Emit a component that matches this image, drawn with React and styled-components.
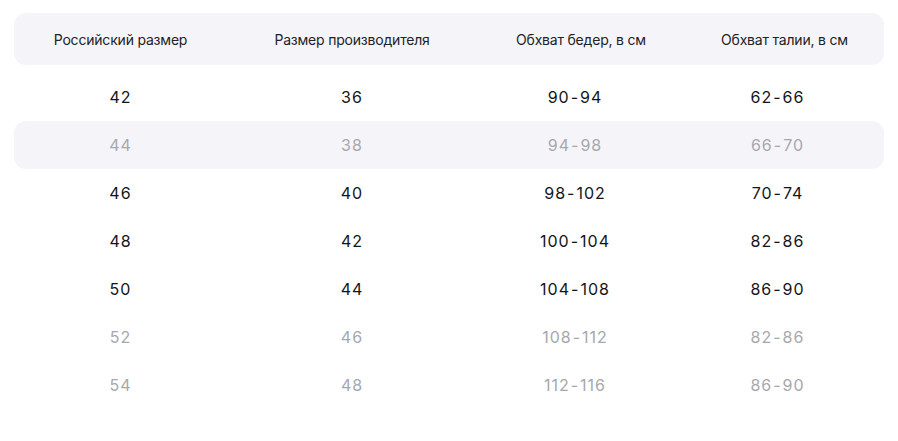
import styled, { createGlobalStyle } from 'styled-components';

const GlobalStyle = createGlobalStyle`
  body {
    margin: 0;
    background: #fff;
    font-family: Inter, "Noto Sans", sans-serif;
  }
`;

// Whole table wrapper
const Table = styled.div`
  padding: 13px 14px 0 14px;
  width: 870px;
`;

// Shared column grid for header and rows
const Row = styled.div`
  display: grid;
  grid-template-columns: 213px 250px 208px 1fr;
  align-items: center;
  height: 48px;
  border-radius: 12px;
  background: ${(p) => (p.$shaded ? '#f5f5f9' : 'transparent')};
`;

const HeaderRow = styled(Row)`
  height: 52px;
  background: #f5f5f9;
  margin-bottom: 8px;
`;

const HeadCell = styled.div`
  text-align: center;
  font-size: 14px;
  letter-spacing: -0.2px;
  color: #222226;
`;

const Cell = styled.div`
  text-align: center;
  font-size: 16px;
  letter-spacing: 1px;
  color: ${(p) => (p.$muted ? '#a7a7ad' : '#141417')};
  padding-right: ${(p) => p.$shift || 0}px;
`;

// a little more air around the range hyphen
const Dash = styled.span`
  margin: 0 1px;
`;

const columns = ['Российский размер', 'Размер производителя', 'Обхват бедер, в см', 'Обхват талии, в см'];

const rows = [
  { v: ['42', '36', '90-94', '62-66'] },
  { v: ['44', '38', '94-98', '66-70'], muted: true, shaded: true },
  { v: ['46', '40', '98-102', '70-74'] },
  { v: ['48', '42', '100-104', '82-86'] },
  { v: ['50', '44', '104-108', '86-90'] },
  { v: ['52', '46', '108-112', '82-86'], muted: true },
  { v: ['54', '48', '112-116', '86-90'], muted: true },
];

// values in the last two columns sit a little left of their headers
const cellShift = [0, 0, 12, 14];

const Value = ({ text }) => {
  const [from, to] = text.split('-');
  if (to === undefined) return text;
  return (
    <>
      {from}
      <Dash>-</Dash>
      {to}
    </>
  );
};

export default function App() {
  return (
    <>
      <GlobalStyle />
      <Table>
        <HeaderRow>
          {columns.map((c) => (
            <HeadCell key={c}>{c}</HeadCell>
          ))}
        </HeaderRow>
        {rows.map((r, i) => (
          <Row key={i} $shaded={r.shaded}>
            {r.v.map((v, j) => (
              <Cell key={j} $muted={r.muted} $shift={cellShift[j]}>
                <Value text={v} />
              </Cell>
            ))}
          </Row>
        ))}
      </Table>
    </>
  );
}
